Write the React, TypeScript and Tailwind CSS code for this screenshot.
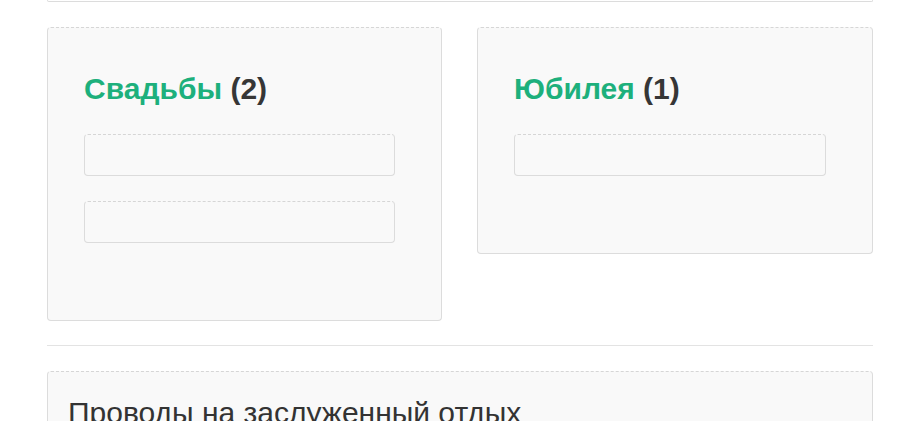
export default function App() {
  const font = { fontFamily: '"Liberation Sans", Arial, sans-serif' };
  const Card = ({ title, count, items }: { title: string; count: number; items: number }) => (
    <div className="bg-[#f9f9f9] border border-[#dcdcdc] [border-top-style:dashed] border-t-[#d6d6d6] rounded-[4px] pl-[36px] pr-[46px] pt-[44px] pb-[77px] self-start">
      <h2 className="text-[30px] leading-[34px] font-bold text-[#363636]">
        <span className="text-[#1db07c]">{title}</span> ({count})
      </h2>
      <div className="mt-[28px] flex flex-col gap-[25px]">
        {Array.from({ length: items }).map((_, i) => (
          <div key={i} className="h-[42px] bg-[#f9f9f9] border border-[#dcdcdc] [border-top-style:dashed] border-t-[#d6d6d6] rounded-[4px]" />
        ))}
      </div>
    </div>
  );
  return (
    <div className="bg-white w-[906px] h-[421px] overflow-hidden" style={font}>
      <div className="ml-[47px] w-[826px]">
        <div className="h-[2px] border-x border-b border-[#dcdcdc] rounded-b-[4px]" />
        <div className="mt-[25px] grid grid-cols-[395px_396px] gap-x-[35px] items-start">
          <Card title="Свадьбы" count={2} items={2} />
          <Card title="Юбилея" count={1} items={1} />
        </div>
        <div className="mt-[24px] h-px bg-[#e3e3e3]" />
        <div className="mt-[25px] bg-[#f9f9f9] border border-[#dcdcdc] [border-top-style:dashed] border-t-[#d6d6d6] rounded-[4px] px-[20px] pt-[24px] h-[200px]">
          <h3 className="text-[30px] leading-[34px] text-[#333]">Проводы на заслуженный отдых</h3>
        </div>
      </div>
    </div>
  );
}
